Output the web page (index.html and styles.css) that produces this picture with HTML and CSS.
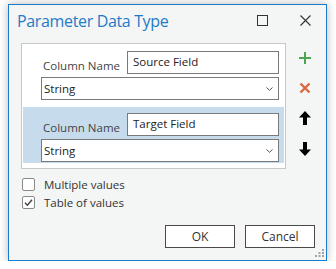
FILE: index.html
```html
<!DOCTYPE html>
<html lang="en">
<head>
  <meta charset="UTF-8">
  <title>Parameter Data Type</title>
  <link rel="stylesheet" href="styles.css">
</head>
<body>
  <div class="dialog">
    <div class="titlebar">
      <h1>Parameter Data Type</h1>
      <div class="win-btn max"><span class="max-box"></span></div>
      <div class="win-btn close">
        <svg width="11" height="11" viewBox="0 0 11 11"><path d="M0.5 0.5 L10.5 10.5 M10.5 0.5 L0.5 10.5" stroke="#333" stroke-width="1.1" fill="none"/></svg>
      </div>
    </div>

    <div class="main">
      <div class="list">
        <div class="row">
          <div class="line">
            <label class="col-label">Column Name</label>
            <div class="field">Source Field</div>
          </div>
          <div class="select">String
            <svg class="chev" width="7" height="4" viewBox="0 0 7 4"><path d="M0.5 0.5 L3.5 3.3 L6.5 0.5" stroke="#555" stroke-width="1" fill="none"/></svg>
          </div>
        </div>
        <div class="row selected">
          <div class="line">
            <label class="col-label">Column Name</label>
            <div class="field">Target Field</div>
          </div>
          <div class="select">String
            <svg class="chev" width="7" height="4" viewBox="0 0 7 4"><path d="M0.5 0.5 L3.5 3.3 L6.5 0.5" stroke="#555" stroke-width="1" fill="none"/></svg>
          </div>
        </div>
      </div>

      <div class="tools">
        <svg width="14" height="14" viewBox="0 0 14 14"><path d="M7 1 V13 M1 7 H13" stroke="#4fa44f" stroke-width="2" fill="none"/></svg>
        <svg width="14" height="14" viewBox="0 0 14 14"><path d="M2.5 2.5 L11.5 11.5 M11.5 2.5 L2.5 11.5" stroke="#d9693f" stroke-width="2.4" fill="none"/></svg>
        <svg width="14" height="14" viewBox="0 0 14 14"><path d="M7 0 L13 6.5 L9 6.5 L9 14 L5 14 L5 6.5 L1 6.5 Z" fill="#000"/></svg>
        <svg width="14" height="15" viewBox="0 0 14 15"><path d="M7 15 L13 8.5 L9 8.5 L9 1 L5 1 L5 8.5 L1 8.5 Z" fill="#000"/></svg>
      </div>
    </div>

    <div class="checks">
      <div class="check">
        <span class="box"></span>
        <span>Multiple values</span>
      </div>
      <div class="check">
        <span class="box">
          <svg width="11" height="11" viewBox="0 0 11 11"><path d="M2 5.8 L4.4 8.2 L9 2.8" stroke="#444" stroke-width="1.5" fill="none"/></svg>
        </span>
        <span>Table of values</span>
      </div>
    </div>

    <div class="footer">
      <button class="btn">OK</button>
      <button class="btn">Cancel</button>
    </div>

    <svg class="grip" width="10" height="10" viewBox="0 0 10 10">
      <rect x="8" y="2" width="2" height="2" fill="#a3a3a3"/>
      <rect x="4.5" y="5" width="2" height="2" fill="#a3a3a3"/>
      <rect x="8" y="5" width="2" height="2" fill="#a3a3a3"/>
      <rect x="1" y="8" width="2" height="2" fill="#a3a3a3"/>
      <rect x="4.5" y="8" width="2" height="2" fill="#a3a3a3"/>
      <rect x="8" y="8" width="2" height="2" fill="#a3a3a3"/>
    </svg>
  </div>
</body>
</html>
```

FILE: styles.css
```css
body {
  margin: 0;
  padding: 4px 0 0 8px;
  background: #fff;
  font-family: 'Open Sans', 'Noto Sans', sans-serif;
  font-size: 11.5px;
  color: #333;
}
.dialog {
  position: relative;
  box-sizing: border-box;
  width: 319px;
  height: 257px;
  border: 1px solid #1a7acb;
  background: #f4f5f5;
  box-shadow: 0 0 9px rgba(0,0,0,0.28);
}
.titlebar {
  display: flex;
  height: 38px;
  box-sizing: border-box;
}
.titlebar h1 {
  flex: 1;
  margin: 0;
  padding: 4px 0 0 8px;
  font-size: 16px;
  font-weight: normal;
  letter-spacing: -0.35px;
  line-height: 24px;
  color: #1f7bc8;
}
.win-btn {
  display: flex;
  justify-content: center;
  padding-top: 10px;
}
.win-btn.max {
  width: 44px;
}
.win-btn.close {
  width: 42px;
}
.max-box {
  display: block;
  width: 9px;
  height: 9px;
  border: 1px solid #333;
}
.main {
  display: flex;
  padding-left: 12px;
}
.list {
  box-sizing: border-box;
  width: 265px;
  height: 126px;
  border: 1px solid #c8c8c8;
  background: #fff;
  padding: 1px;
}
.row {
  box-sizing: border-box;
  height: 56px;
  margin-bottom: 6px;
  padding: 6px 5px 0 18px;
}
.row.selected {
  background: #c6dced;
}
.line {
  display: flex;
  justify-content: flex-end;
  align-items: center;
  height: 23px;
  margin-bottom: 3px;
}
.col-label {
  margin-right: 7px;
  padding-top: 5px;
  color: #444;
}
.field {
  box-sizing: border-box;
  width: 152px;
  height: 23px;
  border: 1px solid #7a7a7a;
  background: #fff;
  padding-left: 5px;
  line-height: 20px;
  color: #222;
}
.select {
  position: relative;
  box-sizing: border-box;
  height: 23px;
  border: 1px solid #7a7a7a;
  background: #fff;
  padding-left: 2px;
  line-height: 21px;
  color: #222;
}
.chev {
  position: absolute;
  right: 5px;
  top: 9px;
}
.tools {
  width: 37px;
  padding-top: 8px;
  display: flex;
  flex-direction: column;
  align-items: center;
  gap: 16px;
}
.checks {
  margin: 6px 0 0 13px;
}
.check {
  display: flex;
  align-items: center;
  height: 18px;
}
.box {
  box-sizing: border-box;
  display: flex;
  align-items: center;
  justify-content: center;
  width: 13px;
  height: 13px;
  border: 1px solid #8a8a8a;
  border-radius: 2px;
  background: #fff;
  margin-right: 9px;
}
.footer {
  display: flex;
  justify-content: flex-end;
  gap: 10px;
  margin-top: 14px;
  padding-right: 11px;
}
.btn {
  width: 70px;
  height: 23px;
  border: 1px solid #4a4a4a;
  background: #fff;
  font-family: inherit;
  font-size: 12px;
  color: #333;
  padding: 0;
}
.grip {
  position: absolute;
  right: 2px;
  bottom: 3px;
}
```
